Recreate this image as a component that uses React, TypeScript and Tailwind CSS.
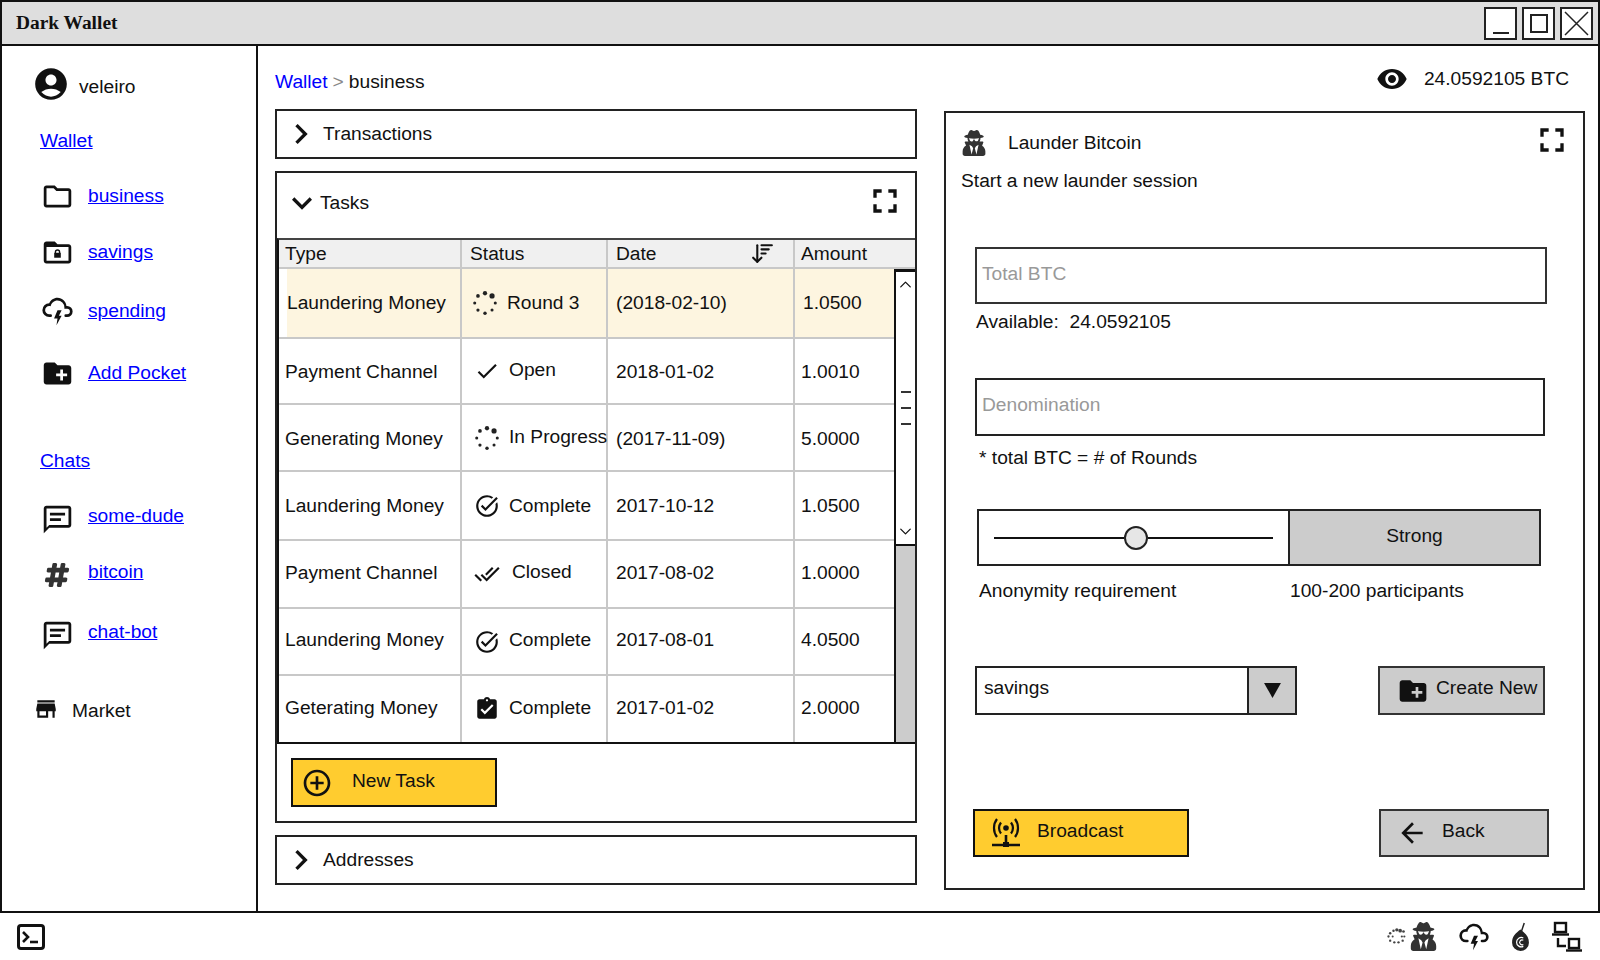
import type { ReactNode } from 'react';
import { ArrowDownWideNarrow, ChevronDown, ChevronUp } from 'lucide-react';
import { FaHashtag, FaUserSecret } from 'react-icons/fa';
import {
  MdAccountCircle, MdAddCircleOutline, MdArrowBack, MdAssignmentTurnedIn, MdCheck, MdChevronRight, MdCreateNewFolder,
  MdDoneAll, MdExpandMore, MdFullscreen, MdOutlineFolder, MdRemoveRedEye, MdStore, MdTaskAlt,
} from 'react-icons/md';

function Dots({ className = 'h-[26px] w-[26px]' }: { className?: string }) {
  const dots = [[12, 3, 2], [18.5, 5.5, 2.4], [21.5, 12, 1.4], [18.5, 18.5, 1.4], [12, 21.5, 1.6], [5.5, 18.5, 1.5], [2.5, 12, 1.4], [5.5, 5.5, 1.7]];
  return (
    <svg viewBox="0 0 24 24" className={className} fill="#222">
      {dots.map(([x, y, r]) => <circle key={`${x}-${y}`} cx={x} cy={y} r={r} />)}
    </svg>
  );
}

function MiniDots() {
  const dots = [[9, 4, 1.5], [13, 3, 2], [17, 4, 2.2], [21, 5, 1.6], [5, 7, 1.5], [3, 11, 1.4], [8, 11, 1.2], [19, 11, 1.3], [22, 11, 1.3], [5, 16, 1.4], [10, 18, 1.4], [15, 18, 1.4], [20, 16, 1.4]];
  return (
    <svg viewBox="0 0 24 22" className="h-[19px] w-[20px]" fill="#444">
      {dots.map(([x, y, r]) => <circle key={`${x}-${y}`} cx={x} cy={y} r={r} />)}
    </svg>
  );
}

function FolderLock() {
  return (
    <svg viewBox="0 0 24 24" className="h-[33px] w-[33px]" fill="#111">
      <path d="M20 6h-8l-2-2H4c-1.1 0-2 .9-2 2v12c0 1.1.9 2 2 2h16c1.1 0 2-.9 2-2V8c0-1.1-.9-2-2-2zm0 12H4V8h16v10z" />
      <rect x="9.6" y="12.2" width="4.8" height="3.6" />
      <path d="M10.5 12.5v-.8a1.5 1.5 0 0 1 3 0v.8" fill="none" stroke="#111" strokeWidth="1" />
    </svg>
  );
}

function CloudBolt({ className }: { className: string }) {
  return (
    <svg viewBox="0 0 24 24" className={className} fill="#111">
      <path d="M6,16A5,5 0 0,1 1,11A5,5 0 0,1 6,6C7,3.65 9.3,2 12,2C15.43,2 18.24,4.66 18.5,8.03L19,8A4,4 0 0,1 23,12A4,4 0 0,1 19,16H18A1,1 0 0,1 17,15A1,1 0 0,1 18,14H19A2,2 0 0,0 21,12A2,2 0 0,0 19,10H17V9A5,5 0 0,0 12,4C9.5,4 7.45,5.82 7.06,8.19C6.73,8.07 6.37,8 6,8A3,3 0 0,0 3,11A3,3 0 0,0 6,14H7A1,1 0 0,1 8,15A1,1 0 0,1 7,16H6M12,11H15L13,15H15L11.25,22L12,17H9.5L12,11Z" />
    </svg>
  );
}

function Bubble() {
  return (
    <svg viewBox="0 0 24 24" className="h-[33px] w-[33px]" fill="#111">
      <path d="M20 2H4c-1.1 0-2 .9-2 2v18l4-4h14c1.1 0 2-.9 2-2V4c0-1.1-.9-2-2-2zm0 14H6l-2 2V4h16v12z" />
      <path d="M6.5 7h11v2h-11zM6.5 11h8v2h-8z" />
    </svg>
  );
}

function Terminal() {
  return (
    <svg viewBox="0 0 28 26" className="h-[26px] w-[28px]">
      <rect x="1.5" y="1.5" width="25" height="23" rx="2.5" fill="#fff" stroke="#111" strokeWidth="3" />
      <path d="M6 8l5 5-5 5" fill="none" stroke="#111" strokeWidth="2.6" />
      <path d="M13 18h8" stroke="#111" strokeWidth="2.6" />
    </svg>
  );
}

function Antenna() {
  return (
    <svg viewBox="0 0 32 32" className="h-[32px] w-[32px] shrink-0" fill="none" stroke="#111" strokeWidth="2.2">
      <path d="M7 2c-4 5-4 13 0 18M25 2c4 5 4 13 0 18" />
      <path d="M11 5.5c-2.5 3.5-2.5 7.5 0 11M21 5.5c2.5 3.5 2.5 7.5 0 11" />
      <circle cx="16" cy="11" r="2.8" fill="#111" stroke="none" />
      <path d="M16 18v9M2 28h28" strokeWidth="2.6" />
      <rect x="13" y="25" width="6" height="5" fill="#111" stroke="none" />
    </svg>
  );
}

function Onion() {
  return (
    <svg viewBox="0 0 20 32" className="h-[30px] w-[19px]">
      <path d="M14 1l-3 9" stroke="#222" strokeWidth="1.6" fill="none" />
      <path d="M10 8c5 4 9 7 9 14a9 9 0 0 1-18 0c0-7 4-10 9-14z" fill="#222" />
      <path d="M13 17a5 5 0 1 0 0 9" stroke="#fff" strokeWidth="1.3" fill="none" />
      <path d="M13 19.5a2.6 2.6 0 1 0 0 4.5" stroke="#fff" strokeWidth="1.2" fill="none" />
    </svg>
  );
}

function Lan() {
  return (
    <svg viewBox="0 0 30 32" className="h-[32px] w-[30px]" fill="none" stroke="#111" strokeWidth="2.4">
      <rect x="3" y="2" width="11" height="9" />
      <path d="M0 13.5h17" />
      <path d="M6 17v8h8" />
      <rect x="17" y="18" width="10" height="9" />
      <path d="M14 29.5h16" />
    </svg>
  );
}

type Nav = { label: string; icon?: ReactNode; mt: string; iconCls?: string };

const NAV: Nav[] = [
  { label: 'Wallet', mt: 'mt-[26px]' },
  { label: 'business', icon: <MdOutlineFolder size={33} />, mt: 'mt-[25px]' },
  { label: 'savings', icon: <FolderLock />, mt: 'mt-[26px]' },
  { label: 'spending', icon: <CloudBolt className="h-[33px] w-[33px]" />, mt: 'mt-[29px]' },
  { label: 'Add Pocket', icon: <MdCreateNewFolder size={33} />, mt: 'mt-[32px]' },
  { label: 'Chats', mt: 'mt-[58px]' },
  { label: 'some-dude', icon: <Bubble />, mt: 'mt-[25px]', iconCls: 'mt-[7px]' },
  { label: 'bitcoin', icon: <FaHashtag size={26} color="#333" stroke="#333" strokeWidth={28} className="ml-[3px]" />, mt: 'mt-[26px]', iconCls: 'mt-[5px]' },
  { label: 'chat-bot', icon: <Bubble />, mt: 'mt-[30px]', iconCls: 'mt-[7px]' },
];

type Row = { type: string; status: string; icon: ReactNode; date: string; amount: string; h: string; sx: string; tx: string };

const ROWS: Row[] = [
  { type: 'Payment Channel', status: 'Open', icon: <MdCheck size={26} />, date: '2018-01-02', amount: '1.0010', h: 'h-[66px]', sx: 'ml-[9px] -mt-[3px]', tx: 'mt-[2px]' },
  { type: 'Generating Money', status: 'In Progress', icon: <Dots />, date: '(2017-11-09)', amount: '5.0000', h: 'h-[67px]', sx: 'ml-[9px] -mt-[1px]', tx: 'mt-[3px]' },
  { type: 'Laundering Money', status: 'Complete', icon: <MdTaskAlt size={26} />, date: '2017-10-12', amount: '1.0500', h: 'h-[69px]', sx: 'ml-[9px]', tx: '' },
  { type: 'Payment Channel', status: 'Closed', icon: <MdDoneAll size={26} />, date: '2017-08-02', amount: '1.0000', h: 'h-[68px]', sx: 'ml-[12px] -mt-[4px]', tx: '-mt-[2px]' },
  { type: 'Laundering Money', status: 'Complete', icon: <MdTaskAlt size={26} />, date: '2017-08-01', amount: '4.0500', h: 'h-[67px]', sx: 'ml-[9px] -mt-[3px]', tx: '-mt-[3px]' },
  { type: 'Geterating Money', status: 'Complete', icon: <MdAssignmentTurnedIn size={26} />, date: '2017-01-02', amount: '2.0000', h: 'h-[66px]', sx: 'ml-[9px] -mt-[2px]', tx: '-mt-[2px]' },
];

const cell = 'flex items-center border-r-2 border-[#c8c8c8]';

function Collapsed({ label, mt }: { label: string; mt: string }) {
  return (
    <div className={`flex h-[50px] items-center border-2 border-[#222] pl-[4px] ${mt}`}>
      <MdChevronRight size={40} className="shrink-0" />
      <span className="ml-[2px]">{label}</span>
    </div>
  );
}

export default function App() {
  return (
    <div className="flex h-[960px] w-[1600px] flex-col overflow-hidden bg-white text-[19.2px] leading-[24px] text-[#111] [font-family:'Liberation_Sans',Arial,sans-serif]">
      <div className="flex flex-1 flex-col border-2 border-[#111]">
        {/* title bar */}
        <div className="flex h-[44px] shrink-0 items-center justify-between border-b-2 border-[#111] bg-[#dedede] pl-[14px] pr-[5px]">
          <span className="text-[19.4px] font-bold [font-family:'Liberation_Serif',serif]">Dark Wallet</span>
          <div className="flex gap-[5px]">
            <div className="flex h-[33px] w-[33px] items-end justify-center border-2 border-[#222] bg-white pb-[4px]"><div className="h-[2px] w-[16px] bg-[#222]" /></div>
            <div className="flex h-[33px] w-[33px] items-center justify-center border-2 border-[#222] bg-white"><div className="h-[19px] w-[18px] border-2 border-[#222]" /></div>
            <div className="flex h-[33px] w-[33px] items-center justify-center border-2 border-[#222] bg-white">
              <svg viewBox="0 0 27 27" className="h-[27px] w-[27px]" stroke="#222" strokeWidth="1.5"><path d="M2 2l23 23M25 2L2 25" /></svg>
            </div>
          </div>
        </div>

        <div className="flex flex-1">
          {/* sidebar */}
          <div className="w-[256px] shrink-0 border-r-2 border-[#111] pl-[33px] pt-[22px]">
            <div className="flex h-[32px] items-center">
              <MdAccountCircle size={38} className="-ml-[3px] shrink-0" />
              <span className="ml-[9px] mt-[6px]">veleiro</span>
            </div>
            {NAV.map((n) => (
              <div key={n.label} className={`flex h-[30px] items-center ${n.mt} ${n.icon ? 'pl-[6px]' : 'pl-[5px]'}`}>
                {n.icon && <span className={`flex w-[47px] shrink-0 items-center ${n.iconCls ?? ''}`}>{n.icon}</span>}
                <a className="text-[#0000ff] underline">{n.label}</a>
              </div>
            ))}
            <div className="mt-[48px] flex h-[30px] items-center">
              <MdStore size={26} className="-ml-[2px] -mt-[2px] shrink-0" />
              <span className="ml-[13px] mt-[2px]">Market</span>
            </div>
          </div>

          {/* main */}
          <div className="flex flex-1 gap-[27px] pl-[17px]">
            <div className="w-[642px] shrink-0 pt-[21px]">
              <div className="flex h-[30px] items-center">
                <span className="text-[#0000ff]">Wallet</span>
                <span className="ml-[5px] text-[#888]">&gt;</span>
                <span className="ml-[5px]">business</span>
              </div>
              <Collapsed label="Transactions" mt="mt-[12px]" />

              <div className="mt-[12px] h-[652px] border-2 border-[#222]">
                <div className="flex h-[65px] items-center justify-between pb-[6px] pl-[5px] pr-[10px]">
                  <div className="flex items-center">
                    <MdExpandMore size={40} className="shrink-0" />
                    <span className="-ml-[2px]">Tasks</span>
                  </div>
                  <MdFullscreen size={40} className="-mt-[4px]" />
                </div>

                <div className="border-2 border-r-0 border-t-[#444] border-l-[#111] border-b-[#111]">
                  <div className="flex h-[27px] bg-[#f0f0f0]">
                    <div className={`${cell} w-[183px] pl-[6px]`}>Type</div>
                    <div className={`${cell} w-[146px] pl-[8px]`}>Status</div>
                    <div className={`${cell} w-[187px] justify-between pl-[8px] pr-[18px]`}>
                      Date
                      <ArrowDownWideNarrow size={25} strokeWidth={2} />
                    </div>
                    <div className="flex flex-1 items-center pl-[6px]">Amount</div>
                  </div>
                  <div className="flex border-t-2 border-[#c8c8c8]">
                    <div className="w-[615px] shrink-0">
                      <div className="flex h-[70px] border-b-2 border-[#c8c8c8]">
                        <div className={`${cell} w-[183px] pl-[8px]`}>
                          <div className="flex h-full flex-1 items-center bg-[#fdf5e0]">Laundering Money</div>
                        </div>
                        <div className={`${cell} w-[146px] bg-[#fdf5e0] pl-[10px]`}>
                          <Dots />
                          <span className="ml-[9px]">Round 3</span>
                        </div>
                        <div className={`${cell} w-[187px] bg-[#fdf5e0] pl-[8px]`}>(2018-02-10)</div>
                        <div className="flex flex-1 items-center bg-[#fdf5e0] pl-[8px]">1.0500</div>
                      </div>
                      {ROWS.map((r, i) => (
                        <div key={`${r.type}-${r.date}`} className={`flex ${r.h} ${i < ROWS.length - 1 ? 'border-b-2 border-[#c8c8c8]' : ''}`}>
                          <div className={`${cell} w-[183px] pl-[6px]`}><span className={r.tx}>{r.type}</span></div>
                          <div className={`${cell} w-[146px] pl-[12px]`}>
                            <span className="flex w-[26px] shrink-0 justify-center">{r.icon}</span>
                            <span className={`whitespace-nowrap ${r.sx}`}>{r.status}</span>
                          </div>
                          <div className={`${cell} w-[187px] pl-[8px]`}><span className={r.tx}>{r.date}</span></div>
                          <div className="flex flex-1 items-center pl-[6px]"><span className={r.tx}>{r.amount}</span></div>
                        </div>
                      ))}
                    </div>
                    {/* scrollbar */}
                    <div className="flex flex-1 flex-col border-l-2 border-[#111] bg-[#ccc]">
                      <div className="flex h-[277px] flex-col items-center justify-between border-b-2 border-t-[3px] border-[#111] bg-white py-[3px]">
                        <ChevronUp size={19} strokeWidth={1.6} />
                        <div className="flex flex-col gap-[14px]">
                          <div className="h-[2px] w-[10px] bg-[#333]" />
                          <div className="h-[2px] w-[10px] bg-[#333]" />
                          <div className="h-[2px] w-[10px] bg-[#333]" />
                        </div>
                        <ChevronDown size={19} strokeWidth={1.6} />
                      </div>
                    </div>
                  </div>
                </div>

                <button className="ml-[14px] mt-[14px] flex h-[49px] w-[206px] items-center border-2 border-[#111] bg-[#ffcc2f] pl-[8px]">
                  <MdAddCircleOutline size={32} className="shrink-0" />
                  <span className="ml-[19px] -mt-[3px]">New Task</span>
                </button>
              </div>

              <Collapsed label="Addresses" mt="mt-[12px]" />
            </div>

            <div className="w-[641px] shrink-0">
              <div className="flex h-[65px] items-center justify-end pb-[2px] pr-[16px] pt-[2px]">
                <MdRemoveRedEye size={32} className="mr-[16px]" />
                <span>24.0592105 BTC</span>
              </div>
              <div className="h-[779px] border-2 border-[#222] px-[15px] pt-[15px]">
                <div className="flex h-[30px] items-center justify-between">
                  <div className="flex items-center">
                    <FaUserSecret size={26} color="#333" />
                    <span className="ml-[21px]">Launder Bitcoin</span>
                  </div>
                  <MdFullscreen size={40} className="-mr-[4px] -mt-[6px]" />
                </div>
                <div className="mt-[8px] flex h-[30px] items-center">Start a new launder session</div>

                <div className="ml-[14px] mt-[51px] flex h-[57px] w-[572px] items-center border-2 border-[#333] pb-[4px] pl-[5px] text-[#999]">Total BTC</div>
                <div className="ml-[15px] mt-[6px] h-[24px] whitespace-pre">Available:  24.0592105</div>

                <div className="ml-[14px] mt-[44px] flex h-[58px] w-[570px] items-center border-2 border-[#222] pb-[4px] pl-[5px] text-[#999]">Denomination</div>
                <div className="ml-[18px] mt-[10px] h-[24px]">* total BTC = # of Rounds</div>

                <div className="ml-[16px] mt-[39px] flex h-[57px] w-[564px]">
                  <div className="flex w-[313px] items-center border-2 border-[#222] pl-[15px] pr-[15px]">
                    <div className="h-[2px] w-[130px] bg-[#111]" />
                    <div className="h-[24px] w-[24px] shrink-0 rounded-full border-2 border-[#222] bg-[#e6e6e6]" />
                    <div className="h-[2px] flex-1 bg-[#111]" />
                  </div>
                  <div className="flex flex-1 items-center justify-center border-y-2 border-r-2 border-[#222] bg-[#ccc] pb-[4px]">Strong</div>
                </div>
                <div className="ml-[18px] mt-[13px] flex h-[24px]">
                  <span className="w-[311px]">Anonymity requirement</span>
                  <span>100-200 participants</span>
                </div>

                <div className="ml-[14px] mt-[63px] flex h-[49px] items-start justify-between">
                  <div className="flex h-[49px] w-[322px] border-2 border-[#222]">
                    <div className="flex flex-1 items-center pb-[6px] pl-[7px]">savings</div>
                    <div className="flex w-[48px] items-center justify-center border-l-2 border-[#222] bg-[#ccc]">
                      <svg viewBox="0 0 18 16" className="h-[15px] w-[17px]" fill="#111"><path d="M0 0h18L9 16z" /></svg>
                    </div>
                  </div>
                  <div className="mr-[23px] flex h-[49px] w-[167px] items-center border-2 border-[#333] bg-[#ccc] pl-[17px]">
                    <MdCreateNewFolder size={32} className="shrink-0" />
                    <span className="ml-[7px] -mt-[6px] whitespace-nowrap">Create New</span>
                  </div>
                </div>

                <div className="ml-[12px] mt-[94px] flex h-[48px] items-start">
                  <div className="flex h-[48px] w-[216px] items-center border-2 border-[#111] bg-[#ffcc2f] pl-[15px]">
                    <Antenna />
                    <span className="ml-[15px] -mt-[5px]">Broadcast</span>
                  </div>
                  <div className="ml-[190px] flex h-[48px] w-[170px] items-center border-2 border-[#333] bg-[#ccc] pl-[15px]">
                    <MdArrowBack size={32} className="shrink-0" />
                    <span className="ml-[14px] -mt-[5px]">Back</span>
                  </div>
                </div>
              </div>
            </div>
          </div>
        </div>
      </div>

      {/* status bar */}
      <div className="flex h-[47px] shrink-0 items-center justify-between pl-[17px] pr-[18px]">
        <Terminal />
        <div className="flex items-center">
          <MiniDots />
          <FaUserSecret size={29} color="#333" className="ml-[3px]" />
          <CloudBolt className="ml-[20px] h-[32px] w-[32px]" />
          <span className="ml-[21px] flex"><Onion /></span>
          <span className="ml-[22px] flex"><Lan /></span>
        </div>
      </div>
    </div>
  );
}
